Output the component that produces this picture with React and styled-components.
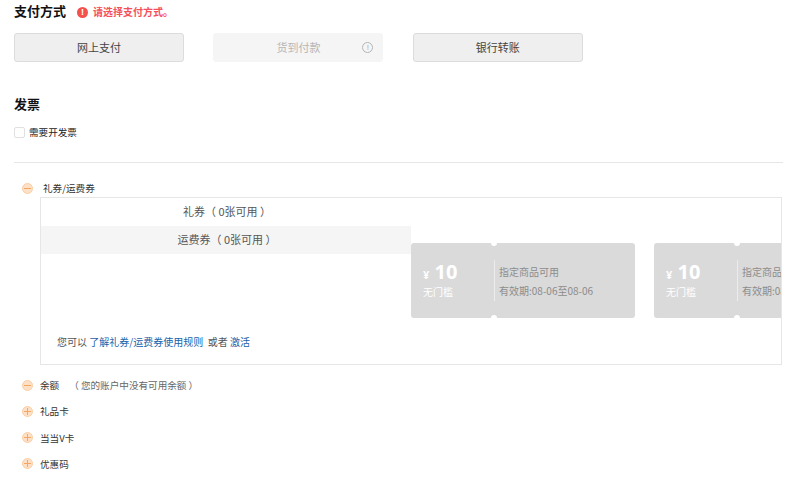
import React from "react";
import styled, { createGlobalStyle } from "styled-components";

const payments = [
  { id: "online", label: "网上支付" },
  { id: "cod", label: "货到付款", disabled: true },
  { id: "bank", label: "银行转账" },
];

const tickets = [1, 2];

export default function App() {
  return (
    <Page>
      <GlobalStyle />
      <TitleRow>
        <Title>支付方式</Title>
        <ErrorIcon>!</ErrorIcon>
        <ErrorText>请选择支付方式。</ErrorText>
      </TitleRow>
      <PayRow>
        {payments.map((item) => (
          <PayButton key={item.id} disabled={item.disabled}>
            {item.label}
            {item.disabled && <InfoIcon>!</InfoIcon>}
          </PayButton>
        ))}
      </PayRow>
      <InvoiceTitle>发票</InvoiceTitle>
      <CheckRow>
        <CheckBox />
        <span>需要开发票</span>
      </CheckRow>
      <Divider />
      <FirstRow>
        <Toggle />
        <FirstLabel>礼券/运费券</FirstLabel>
      </FirstRow>
      <CouponBox>
        <LeftColumn>
          <div>
            <Tab>礼券（ 0张可用 ）</Tab>
            <Tab $active>运费券（ 0张可用 ）</Tab>
          </div>
          <Note>
            您可以 <NoteLink>了解礼券/运费券使用规则</NoteLink> &nbsp;或者 <NoteLink>激活</NoteLink>
          </Note>
        </LeftColumn>
        <TicketList>
          {tickets.map((id) => (
            <Ticket key={id}>
              <TicketLeft>
                <Amount>
                  <small>¥</small> 10
                </Amount>
                <Threshold>无门槛</Threshold>
              </TicketLeft>
              <TicketRight>
                <div>指定商品可用</div>
                <div>有效期:08-06至08-06</div>
              </TicketRight>
            </Ticket>
          ))}
        </TicketList>
      </CouponBox>
      <OptionList>
        <OptionRow>
          <Toggle />
          <span>余额</span>
          <OptionHint>（ 您的账户中没有可用余额 ）</OptionHint>
        </OptionRow>
        <OptionRow>
          <Toggle $plus />
          <span>礼品卡</span>
        </OptionRow>
        <OptionRow>
          <Toggle $plus />
          <span>当当V卡</span>
        </OptionRow>
        <OptionRow>
          <Toggle $plus />
          <span>优惠码</span>
        </OptionRow>
      </OptionList>
    </Page>
  );
}

const GlobalStyle = createGlobalStyle`
  body {
    margin: 0;
    background: #fff;
    font-family: "Noto Sans CJK SC", "Liberation Sans", sans-serif;
    color: #333;
  }
`;

const Page = styled.div`
  width: 790px;
  height: 485px;
  overflow: hidden;
  padding: 2px 7px 0 14px;
  box-sizing: border-box;
`;

const TitleRow = styled.div`
  display: flex;
  align-items: center;
  height: 18px;
`;

const Title = styled.h2`
  margin: 0 11px 0 0;
  font-size: 13px;
  line-height: 18px;
  font-weight: 700;
  color: #111;
`;

const ErrorIcon = styled.span`
  width: 11px;
  height: 11px;
  margin: 2px 5px 0 0;
  border-radius: 50%;
  background: #f4504c;
  color: #fff;
  font: 700 9px/11px "Liberation Sans", sans-serif;
  text-align: center;
`;

const ErrorText = styled.span`
  font-size: 10px;
  font-weight: 700;
  color: #f4505a;
`;

const PayRow = styled.div`
  display: flex;
  gap: 29.4px;
  margin-top: 13px;
`;

const PayButton = styled.div`
  position: relative;
  width: 170px;
  height: 29px;
  box-sizing: border-box;
  border: 1px solid ${(p) => (p.disabled ? "#f5f5f5" : "#dcdcdc")};
  border-radius: 3px;
  background: ${(p) => (p.disabled ? "#f5f5f5" : "#efefef")};
  color: ${(p) => (p.disabled ? "#b5b5b5" : "#444")};
  font-size: 11px;
  line-height: 27px;
  text-align: center;
`;

const InfoIcon = styled.span`
  position: absolute;
  right: 9px;
  top: 8px;
  width: 11px;
  height: 11px;
  box-sizing: border-box;
  border: 1px solid #b5b5b5;
  border-radius: 50%;
  font: 8px/9px "Liberation Sans", sans-serif;
  color: #aaa;
`;

const InvoiceTitle = styled.h2`
  margin: 32px 0 0;
  font-size: 13px;
  line-height: 20px;
  font-weight: 700;
  color: #111;
`;

const CheckRow = styled.div`
  display: flex;
  align-items: center;
  gap: 4px;
  margin-top: 12px;
  font-size: 9.6px;
  line-height: 12px;
  color: #222;
`;

const CheckBox = styled.span`
  width: 11px;
  height: 11px;
  box-sizing: border-box;
  border: 1px solid #e0e0e0;
  border-radius: 2px;
`;

const Divider = styled.div`
  height: 1px;
  width: 769px;
  background: #e6e6e6;
  margin-top: 24px;
`;

const FirstRow = styled.div`
  display: flex;
  align-items: center;
  height: 12px;
  margin: 19px 0 0 8px;
  font-size: 9.6px;
  color: #333;
`;

const FirstLabel = styled.span`
  margin-left: 10px;
`;

const Toggle = styled.span`
  position: relative;
  flex: none;
  width: 11px;
  height: 11px;
  box-sizing: border-box;
  border: 1px solid #fbcfa6;
  border-radius: 50%;
  background: #fde0c6;

  &::before {
    content: "";
    position: absolute;
    left: 1px;
    right: 1px;
    top: 4px;
    height: 1px;
    background: #f3a862;
  }

  ${(p) =>
    p.$plus &&
    `
    &::after {
      content: "";
      position: absolute;
      top: 1px;
      bottom: 1px;
      left: 4px;
      width: 1px;
      background: #f3a862;
    }
  `}
`;

const CouponBox = styled.div`
  display: flex;
  width: 742px;
  height: 168px;
  box-sizing: border-box;
  margin: 3px 0 0 26px;
  border: 1px solid #e6e6e6;
  overflow: hidden;
`;

const LeftColumn = styled.div`
  flex: none;
  width: 370px;
  display: flex;
  flex-direction: column;
  justify-content: space-between;
  padding-bottom: 15px;
`;

const Tab = styled.div`
  height: 28px;
  padding-left: 2px;
  line-height: 27px;
  text-align: center;
  font-size: 11px;
  color: #555;
  background: ${(p) => (p.$active ? "#f5f5f5" : "transparent")};
`;

const Note = styled.div`
  padding-left: 16px;
  font-size: 10px;
  line-height: 14px;
  color: #555;
`;

const NoteLink = styled.span`
  color: #1a5fa8;
`;

const TicketList = styled.div`
  display: flex;
  gap: 19px;
  padding-top: 45px;
`;

const Ticket = styled.div`
  position: relative;
  flex: none;
  display: flex;
  width: 224px;
  height: 75px;
  border-radius: 3px;
  background: #dadada;

  &::before,
  &::after {
    content: "";
    position: absolute;
    left: 80px;
    width: 6px;
    height: 6px;
    border-radius: 50%;
    background: #fff;
  }

  &::before {
    top: -3px;
  }

  &::after {
    bottom: -3px;
  }
`;

const TicketLeft = styled.div`
  width: 83px;
  padding: 20px 0 0 12px;
  box-sizing: border-box;
  color: #fff;
`;

const Amount = styled.div`
  font: 700 20px/18px "Open Sans", "Liberation Sans", sans-serif;

  small {
    font-size: 11px;
    font-weight: 700;
  }
`;

const Threshold = styled.div`
  font-size: 10px;
  line-height: 16px;
`;

const TicketRight = styled.div`
  position: relative;
  flex: 1;
  padding: 19px 0 0 5px;
  font-size: 10px;
  line-height: 19px;
  color: #8c8c8c;
  white-space: nowrap;

  &::before {
    content: "";
    position: absolute;
    left: 0;
    top: 17px;
    height: 41px;
    width: 1px;
    background: #ececec;
  }
`;

const OptionList = styled.div`
  display: flex;
  flex-direction: column;
  gap: 14.3px;
  margin: 14px 0 0 8px;
`;

const OptionRow = styled.div`
  display: flex;
  align-items: center;
  height: 12px;
  gap: 7px;
  font-size: 9.6px;
  color: #333;
`;

const OptionHint = styled.span`
  margin-left: 3px;
  color: #666;
`;
